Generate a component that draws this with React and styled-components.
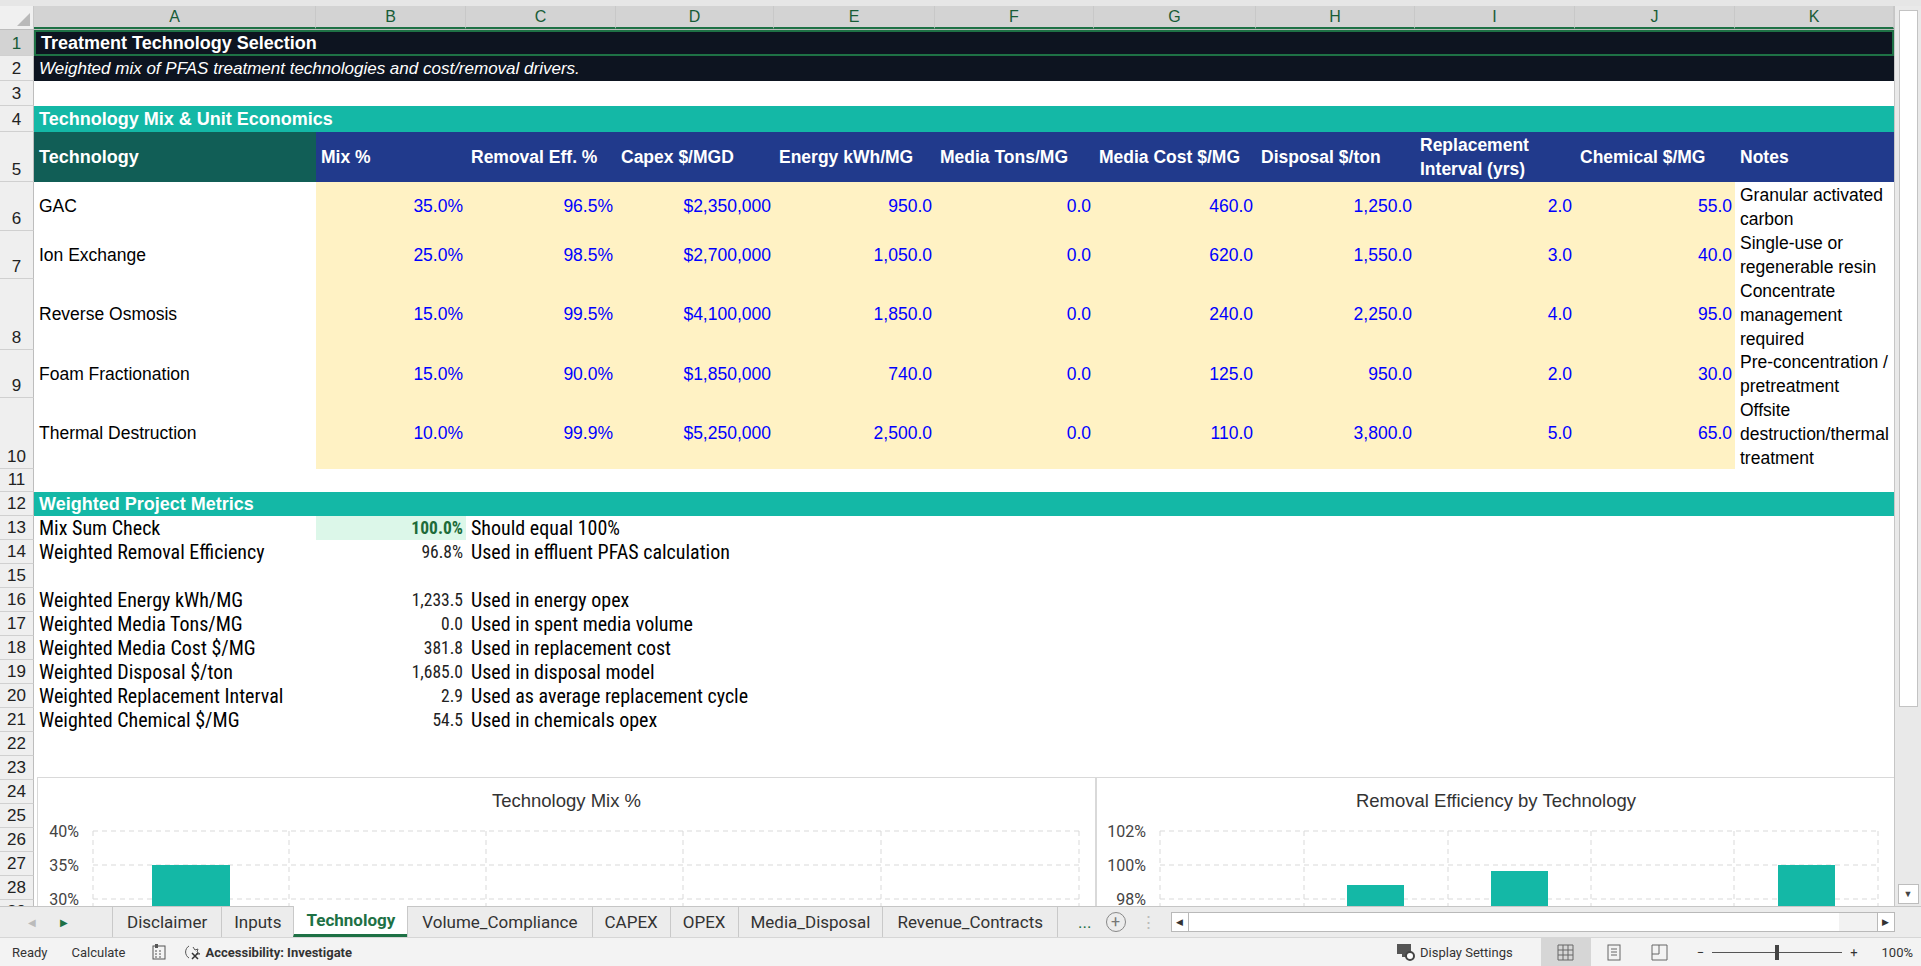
import React from "react";
import styled, { createGlobalStyle } from "styled-components";

const Global = createGlobalStyle`
  html, body { margin: 0; padding: 0; background: #fff; overflow: hidden; }
  body { font-family: "Liberation Sans", Arial, sans-serif; }
`;

const COLS = [34, 282, 150, 150, 158, 161, 159, 162, 159, 160, 160, 159];
const TEMPLATE = COLS.map((c) => c + "px").join(" ");
const LETTERS = ["A", "B", "C", "D", "E", "F", "G", "H", "I", "J", "K"];

const Page = styled.div`
  width: 1921px; height: 966px; display: flex; flex-direction: column; background: #e6e6e6;
`;
const TopStrip = styled.div` height: 6px; background: #e6e6e6; `;
const Main = styled.div` display: flex; height: 900px; `;
const Sheet = styled.div`
  position: relative; width: 1894px; height: 900px; overflow: hidden; background: #fff;
`;
const VScroll = styled.div`
  width: 27px; background: #e9e9e9; border-left: 1px solid #c6c6c6; display: flex; flex-direction: column; align-items: center; box-sizing: border-box; padding: 2px 0;
`;
const Thumb = styled.div` width: 17px; height: 695px; background: #fff; border: 1px solid #c3c3c3; margin-top: 2px; `;
const ScrollBtn = styled.div`
  width: 19px; height: 18px; background: #fff; border: 1px solid #bdbdbd; margin-top: auto;
  display: flex; align-items: center; justify-content: center; font-size: 9px; color: #444;
`;
const Row = styled.div`
  display: grid; grid-template-columns: ${TEMPLATE}; height: ${(p) => p.$h}px;
`;
const ColHead = styled.div`
  height: 23px; display: grid; grid-template-columns: ${TEMPLATE};
  background: #f0f0f0; border-bottom: 1px solid #bdbdbd;
`;
const ColLetter = styled.div`
  display: flex; align-items: center; justify-content: center;
  font-family: "Liberation Sans", Arial, sans-serif; font-size: 16px;
  color: ${(p) => (p.$sel ? "#185c37" : "#333")};
  background: ${(p) => (p.$sel ? "#d3d3d3" : "#f0f0f0")};
  border-right: 1px solid #c8c8c8;
  border-bottom: ${(p) => (p.$sel ? "2px solid #1e7145" : "none")};
  box-sizing: border-box;
`;
const Corner = styled.div`
  background: #f0f0f0; border-right: 1px solid #c8c8c8; position: relative;
  &::after { content: ""; position: absolute; right: 3px; bottom: 3px; border-left: 13px solid transparent; border-bottom: 13px solid #b9b9b9; }
`;
const RowNum = styled.div`
  background: ${(p) => (p.$sel ? "#d3d3d3" : "#efefef")};
  color: ${(p) => (p.$sel ? "#185c37" : "#222")};
  border-right: 1px solid #bdbdbd; border-bottom: 1px solid #d0d0d0; box-sizing: border-box;
  display: flex; align-items: flex-end; justify-content: center; padding-bottom: 1px;
  font-family: "Liberation Sans", Arial, sans-serif; font-size: 17px;
`;
const Cell = styled.div`
  grid-column: span ${(p) => p.$span || 1};
  background: ${(p) => p.$bg || "transparent"};
  color: ${(p) => p.$color || "#000"};
  font-weight: ${(p) => (p.$bold ? 700 : 400)};
  font-style: ${(p) => (p.$italic ? "italic" : "normal")};
  font-size: ${(p) => p.$fs || 17.5}px;
  font-family: ${(p) => (p.$narrow ? '"Liberation Sans Narrow", "Roboto Condensed", Roboto, sans-serif' : '"Liberation Sans", Arial, sans-serif')};
  display: flex; align-items: ${(p) => p.$valign || "center"};
  justify-content: ${(p) => (p.$right ? "flex-end" : "flex-start")};
  text-align: ${(p) => (p.$right ? "right" : "left")};
  padding: 0 3px 0 ${(p) => (p.$right ? 3 : 5)}px; box-sizing: border-box; white-space: ${(p) => (p.$wrap ? "normal" : "nowrap")};
  line-height: ${(p) => (p.$wrap ? "24px" : "normal")};
  overflow: ${(p) => (p.$clip ? "hidden" : "visible")};
  border: ${(p) => p.$border || "none"};
`;

const Chart = styled.div`
  position: absolute; top: ${(p) => p.$top}px; left: ${(p) => p.$left}px;
  width: ${(p) => p.$w}px; height: 260px; background: #fff; border: 1px solid #d9d9d9;
`;
const ChartTitle = styled.div`
  text-align: center; padding-top: 12px; font-size: 18.5px; color: #333;
  font-family: "Liberation Sans", Arial, sans-serif;
`;
const ChartSvg = styled.svg` position: absolute; left: 0; top: 0; `;

const TabBar = styled.div`
  height: 30px; display: flex; align-items: stretch; background: #ececec; border-top: 1px solid #c6c6c6;
  font-family: "Liberation Sans Narrow", Roboto, sans-serif; font-size: 17px; color: #333;
`;
const Nav = styled.div`
  width: 112px; display: flex; align-items: center; gap: 24px; padding-left: 28px; box-sizing: border-box; font-size: 10px;
`;
const Tab = styled.div`
  display: flex; align-items: center; padding: 0 ${(p) => p.$pad || 12}px;
  border-left: 1px solid #c9c9c9;
  background: ${(p) => (p.$active ? "#fff" : "transparent")};
  color: ${(p) => (p.$active ? "#1e7145" : "#333")};
  font-weight: ${(p) => (p.$active ? 700 : 400)};
  border-bottom: ${(p) => (p.$active ? "3px solid #1e7145" : "none")};
  margin-top: ${(p) => (p.$active ? "-1px" : "0")};
`;
const TabTools = styled.div`
  display: flex; align-items: center; gap: 14px; padding-left: 20px; color: #1e7145; border-left: 1px solid #c9c9c9;
`;
const PlusBtn = styled.div`
  width: 18px; height: 18px; border-radius: 50%; border: 1.5px solid #888; color: #777;
  display: flex; align-items: center; justify-content: center; font-size: 16px; line-height: 1;
`;
const HScroll = styled.div`
  margin-left: 14px; margin-top: 5px; width: 722px; height: 18px; display: flex; border: 1px solid #b9b9b9; background: #fff;
`;
const HBtn = styled.div`
  width: 16px; display: flex; align-items: center; justify-content: center; font-size: 9px; color: #333;
  border-${(p) => p.$side}: 1px solid #b9b9b9;
`;
const Status = styled.div`
  height: 29px; display: flex; align-items: center; background: #f3f3f3; border-top: 1px solid #d6d6d6;
  font-family: "Liberation Sans Narrow", Roboto, sans-serif; font-size: 13px; color: #333; padding-left: 12px; box-sizing: border-box;
`;
const SItem = styled.span` margin-right: ${(p) => p.$mr || 20}px; font-weight: ${(p) => (p.$bold ? 700 : 400)}; display: flex; align-items: center; gap: 4px; `;
const Spacer = styled.div` flex: 1; `;
const ViewBtn = styled.div`
  width: ${(p) => p.$w || 46}px; height: 28px; display: flex; align-items: center; justify-content: center;
  background: ${(p) => (p.$active ? "#d6d6d6" : "transparent")};
`;
const Zoom = styled.div` display: flex; align-items: center; gap: 8px; margin-left: 14px; `;
const Slider = styled.div`
  position: relative; width: 130px; height: 1px; background: #555;
  &::after { content: ""; position: absolute; left: 63px; top: -7px; width: 4px; height: 15px; background: #444; }
`;

const techs = [
  ["GAC", 49, ["35.0%", "96.5%", "$2,350,000", "950.0", "0.0", "460.0", "1,250.0", "2.0", "55.0"], "Granular activated carbon"],
  ["Ion Exchange", 48, ["25.0%", "98.5%", "$2,700,000", "1,050.0", "0.0", "620.0", "1,550.0", "3.0", "40.0"], "Single-use or regenerable resin"],
  ["Reverse Osmosis", 71, ["15.0%", "99.5%", "$4,100,000", "1,850.0", "0.0", "240.0", "2,250.0", "4.0", "95.0"], "Concentrate management required"],
  ["Foam Fractionation", 48, ["15.0%", "90.0%", "$1,850,000", "740.0", "0.0", "125.0", "950.0", "2.0", "30.0"], "Pre-concentration / pretreatment"],
  ["Thermal Destruction", 71, ["10.0%", "99.9%", "$5,250,000", "2,500.0", "0.0", "110.0", "3,800.0", "5.0", "65.0"], "Offsite destruction/thermal treatment"],
];
const headers = ["Mix %", "Removal Eff. %", "Capex $/MGD", "Energy kWh/MG", "Media Tons/MG", "Media Cost $/MG", "Disposal $/ton", "Replacement Interval (yrs)", "Chemical $/MG", "Notes"];
const metrics = [
  [13, "Mix Sum Check", "100.0%", "Should equal 100%", true],
  [14, "Weighted Removal Efficiency", "96.8%", "Used in effluent PFAS calculation"],
  [15, "", "", ""],
  [16, "Weighted Energy kWh/MG", "1,233.5", "Used in energy opex"],
  [17, "Weighted Media Tons/MG", "0.0", "Used in spent media volume"],
  [18, "Weighted Media Cost $/MG", "381.8", "Used in replacement cost"],
  [19, "Weighted Disposal $/ton", "1,685.0", "Used in disposal model"],
  [20, "Weighted Replacement Interval", "2.9", "Used as average replacement cycle"],
  [21, "Weighted Chemical $/MG", "54.5", "Used in chemicals opex"],
  [22, "", "", ""],
  [23, "", "", ""],
];

const TEAL = "#14b8a6";
const NAVY = "#213a8c";
const YEL = "#fff2c4";
const BLUE = "#0000ff";

function ChartBody({ labels, plotLeft, lines, bars, w }) {
  return (
    <ChartSvg width={w} height={260}>
      {labels.map((l, i) => (
        <g key={l}>
          <line x1={plotLeft} x2={w - 16} y1={53 + i * 34} y2={53 + i * 34} stroke="#d9d9d9" strokeDasharray="5 4" />
          <text x={plotLeft - 14} y={59 + i * 34} textAnchor="end" fontSize="16" fill="#444" fontFamily="Liberation Sans Narrow, Roboto, sans-serif">{l}</text>
        </g>
      ))}
      {lines.map((x) => (
        <line key={x} x1={x} x2={x} y1={53} y2={260} stroke="#d9d9d9" strokeDasharray="5 4" />
      ))}
      {bars.map(([x, y, bw], i) => (
        <rect key={i} x={x} y={y} width={bw} height={260 - y} fill={TEAL} />
      ))}
    </ChartSvg>
  );
}

export default function App() {
  return (
    <Page>
      <Global />
      <TopStrip />
      <Main>
        <Sheet>
          <ColHead>
            <Corner />
            {LETTERS.map((l) => (
              <ColLetter key={l} $sel>{l}</ColLetter>
            ))}
          </ColHead>
          <Row $h={26}>
            <RowNum $sel>1</RowNum>
            <Cell $span={11} $bg="#0d1420" $color="#fff" $bold $fs={18} $border="2px solid #1e7145">Treatment Technology Selection</Cell>
          </Row>
          <Row $h={25}>
            <RowNum>2</RowNum>
            <Cell $span={11} $bg="#0d1420" $color="#fff" $italic $fs={17}>Weighted mix of PFAS treatment technologies and cost/removal drivers.</Cell>
          </Row>
          <Row $h={25}>
            <RowNum>3</RowNum>
            <Cell $span={11} />
          </Row>
          <Row $h={26}>
            <RowNum>4</RowNum>
            <Cell $span={11} $bg={TEAL} $color="#fff" $bold $fs={18}>Technology Mix &amp; Unit Economics</Cell>
          </Row>
          <Row $h={50}>
            <RowNum>5</RowNum>
            <Cell $bg="#115e56" $color="#fff" $bold $fs={18}>Technology</Cell>
            {headers.map((h) => (
              <Cell key={h} $bg={NAVY} $color="#fff" $bold $fs={17.5} $wrap={h.length > 20} style={{ lineHeight: h.length > 20 ? "24px" : undefined }}>{h}</Cell>
            ))}
          </Row>
          {techs.map(([name, h, vals, note], i) => (
            <Row key={name} $h={h}>
              <RowNum>{6 + i}</RowNum>
              <Cell>{name}</Cell>
              {vals.map((v, j) => (
                <Cell key={j} $bg={YEL} $color={BLUE} $right>{v}</Cell>
              ))}
              <Cell $wrap $clip>{note}</Cell>
            </Row>
          ))}
          <Row $h={23}>
            <RowNum>11</RowNum>
            <Cell $span={11} />
          </Row>
          <Row $h={24}>
            <RowNum>12</RowNum>
            <Cell $span={11} $bg={TEAL} $color="#fff" $bold $fs={18}>Weighted Project Metrics</Cell>
          </Row>
          {metrics.map(([n, label, val, note, check]) => (
            <Row key={n} $h={24}>
              <RowNum>{n}</RowNum>
              <Cell $narrow $fs={20}>{label}</Cell>
              <Cell $narrow $fs={17.5} $right $bg={check ? "#dcf7e9" : undefined} $color={check ? "#1e6b3a" : "#222"} $bold={check}>{val}</Cell>
              <Cell $narrow $fs={20} $span={9}>{note}</Cell>
            </Row>
          ))}
          {[24, 25, 26, 27, 28, 29].map((n) => (
            <Row key={n} $h={24}>
              <RowNum>{n}</RowNum>
              <Cell $span={11} />
            </Row>
          ))}
          <Chart $top={771} $left={37} $w={1057}>
            <ChartTitle>Technology Mix %</ChartTitle>
            <ChartBody
              w={1057}
              labels={["40%", "35%", "30%"]}
              plotLeft={55}
              lines={[55, 251, 448, 645, 843, 1041]}
              bars={[[114, 87, 78], [310, 155, 78], [507, 189, 78], [704, 189, 78], [902, 223, 78]]}
            />
          </Chart>
          <Chart $top={771} $left={1096} $w={798}>
            <ChartTitle>Removal Efficiency by Technology</ChartTitle>
            <ChartBody
              w={798}
              labels={["102%", "100%", "98%"]}
              plotLeft={63}
              lines={[63, 207, 351, 494, 637, 781]}
              bars={[[106, 146, 57], [250, 107, 57], [394, 93, 57], [537, 257, 57], [681, 87, 57]]}
            />
          </Chart>
        </Sheet>
        <VScroll>
          <Thumb />
          <ScrollBtn>▼</ScrollBtn>
        </VScroll>
      </Main>
      <TabBar>
        <Nav>
          <span style={{ color: "#bbb" }}>◀</span>
          <span style={{ color: "#1e7145" }}>▶</span>
        </Nav>
        <Tab $pad={14}>Disclaimer</Tab>
        <Tab>Inputs</Tab>
        <Tab $active $pad={12}>Technology</Tab>
        <Tab $pad={14}>Volume_Compliance</Tab>
        <Tab>CAPEX</Tab>
        <Tab>OPEX</Tab>
        <Tab>Media_Disposal</Tab>
        <Tab $pad={14}>Revenue_Contracts</Tab>
        <TabTools>
          <span>...</span>
          <PlusBtn>+</PlusBtn>
          <span style={{ color: "#bbb" }}>⋮</span>
        </TabTools>
        <HScroll>
          <HBtn $side="right">◀</HBtn>
          <Spacer />
          <div style={{ width: 38, background: "#f2f2f2" }} />
          <HBtn $side="left">▶</HBtn>
        </HScroll>
      </TabBar>
      <Status>
        <SItem $mr={24}>Ready</SItem>
        <SItem $mr={26}>Calculate</SItem>
        <SItem $mr={18}>
          <svg width="14" height="16" viewBox="0 0 14 16"><rect x="1" y="2" width="12" height="13" fill="none" stroke="#555" /><rect x="3" y="0" width="3" height="4" fill="#555" /><path d="M3 7h2M7 7h2M3 10h2M7 10h2M3 13h2M7 13h2" stroke="#555" /></svg>
        </SItem>
        <SItem $bold>
          <svg width="18" height="16" viewBox="0 0 18 16"><path d="M5 2a7 7 0 0 0 0 12" stroke="#555" fill="none" /><path d="M9 3l2 3 3-1-1 3 3 2-4 0" stroke="#555" fill="none" /><path d="M8 9l6 6M14 9l-6 6" stroke="#333" strokeWidth="1.5" /></svg>
          Accessibility: Investigate
        </SItem>
        <Spacer />
        <SItem $mr={28}>
          <svg width="20" height="18" viewBox="0 0 20 18"><rect x="1" y="1" width="14" height="10" fill="#555" /><rect x="6" y="11" width="4" height="3" fill="#555" /><circle cx="14" cy="13" r="4" fill="#fff" stroke="#444" strokeWidth="2" /></svg>
          Display Settings
        </SItem>
        <ViewBtn $active $w={50}>
          <svg width="17" height="17" viewBox="0 0 17 17"><path d="M1 1h15v15H1zM6 1v15M11 1v15M1 6h15M1 11h15" fill="none" stroke="#666" /></svg>
        </ViewBtn>
        <ViewBtn>
          <svg width="14" height="17" viewBox="0 0 14 17"><rect x="1" y="1" width="12" height="15" fill="none" stroke="#666" /><path d="M4 5h6M4 8h6M4 11h6" stroke="#666" /></svg>
        </ViewBtn>
        <ViewBtn>
          <svg width="17" height="17" viewBox="0 0 17 17"><path d="M1 1h15v15H1zM8 1v9H1" fill="none" stroke="#666" /></svg>
        </ViewBtn>
        <Zoom>
          <span>−</span>
          <Slider />
          <span>+</span>
          <span style={{ marginLeft: 16, marginRight: 8 }}>100%</span>
        </Zoom>
      </Status>
    </Page>
  );
}
